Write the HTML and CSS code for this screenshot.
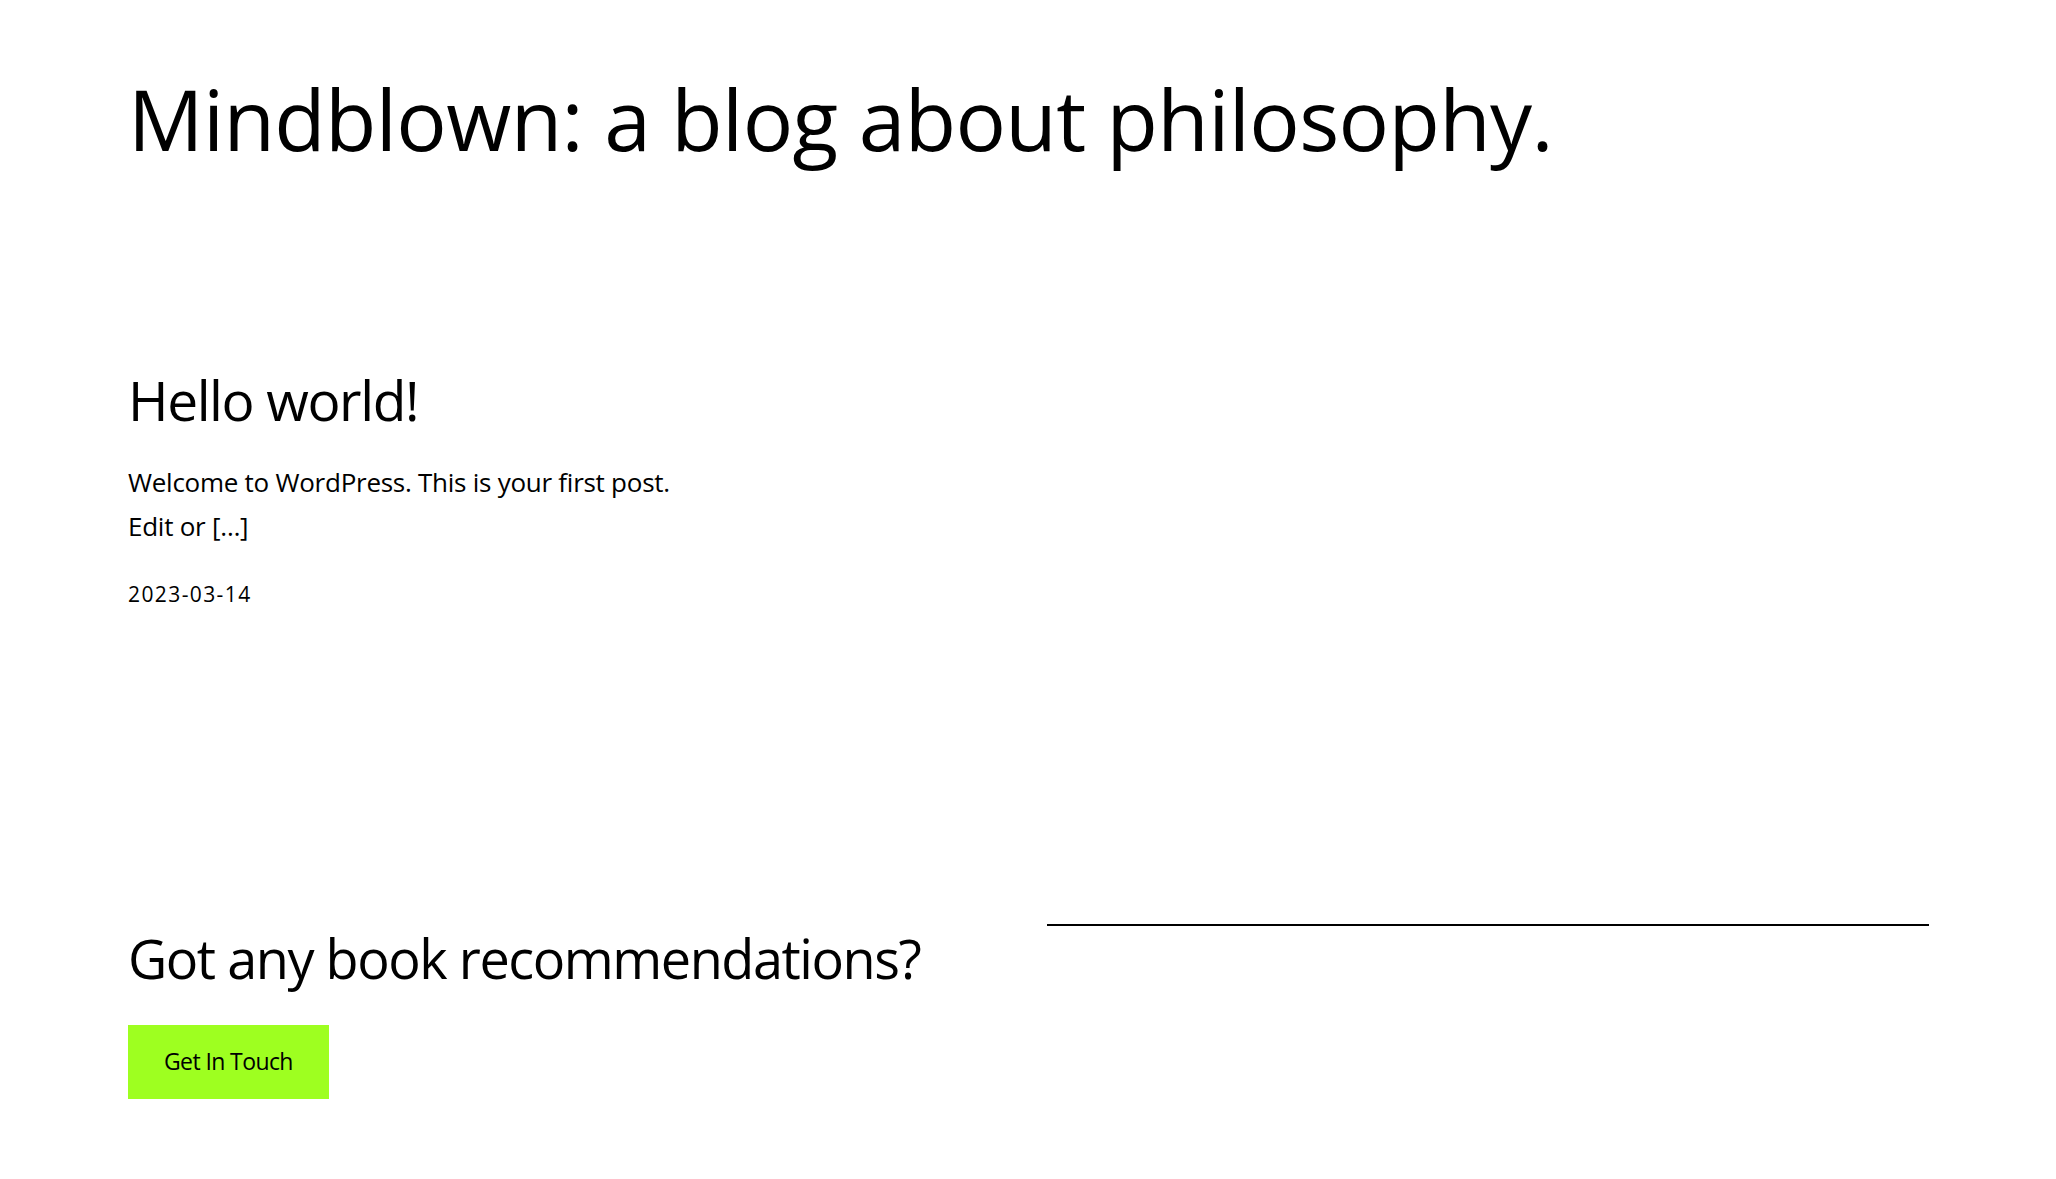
FILE: index.html
```html
<!DOCTYPE html>
<html lang="en">
<head>
<meta charset="utf-8">
<title>Mindblown: a blog about philosophy.</title>
<link rel="stylesheet" href="styles.css">
</head>
<body>
<div class="page">
  <header class="site-header">
    <h1 class="site-title">Mindblown: a blog about philosophy.</h1>
  </header>
  <main class="posts">
    <article class="post">
      <h2 class="post-title">Hello world!</h2>
      <p class="post-excerpt">Welcome to WordPress. This is your first post. Edit or […]</p>
      <div class="post-date">2023-03-14</div>
    </article>
  </main>
  <footer class="site-footer">
    <div class="footer-left">
      <h2 class="cta-title">Got any book recommendations?</h2>
      <a href="#" class="cta-button">Get In Touch</a>
    </div>
    <div class="footer-right">
      <hr class="separator">
    </div>
  </footer>
</div>
</body>
</html>
```
FILE: styles.css
```css
html, body {
  margin: 0;
  padding: 0;
  background: #ffffff;
}

body {
  font-family: "Open Sans", "Noto Sans", sans-serif;
  color: #000000;
}

.page {
  padding: 0 127px 0 128px;
}

.site-header {
  padding-top: 69px;
}

.site-title {
  margin: 0;
  font-size: 84px;
  font-weight: 400;
  line-height: 1.2;
  letter-spacing: -0.65px;
}

.posts {
  padding-top: 197px;
}

.post {
  width: 580px;
}

.post-title {
  margin: 0;
  font-size: 55px;
  font-weight: 400;
  line-height: 1.2;
  letter-spacing: -1.4px;
}

.post-excerpt {
  margin: 28px 0 0;
  font-size: 26px;
  line-height: 43.7px;
  letter-spacing: -0.26px;
}

.post-date {
  margin-top: 31px;
  font-size: 21px;
  line-height: 1.5;
  letter-spacing: 1.4px;
}

.site-footer {
  display: grid;
  grid-template-columns: 1fr 1fr;
  column-gap: 37px;
  align-items: start;
  margin-top: 315px;
  padding-bottom: 78px;
}

.cta-title {
  margin: 0;
  font-size: 54px;
  font-weight: 400;
  line-height: 1.2;
  letter-spacing: -1.45px;
}

.cta-button {
  display: inline-block;
  margin-top: 34px;
  padding: 23.6px 36px;
  background: #9eff20;
  color: #000000;
  font-size: 23px;
  line-height: 1.2;
  letter-spacing: -0.6px;
  text-decoration: none;
}

.separator {
  margin: -2px 0 0;
  border: 0;
  border-top: 2px solid #000000;
  height: 0;
}
```
